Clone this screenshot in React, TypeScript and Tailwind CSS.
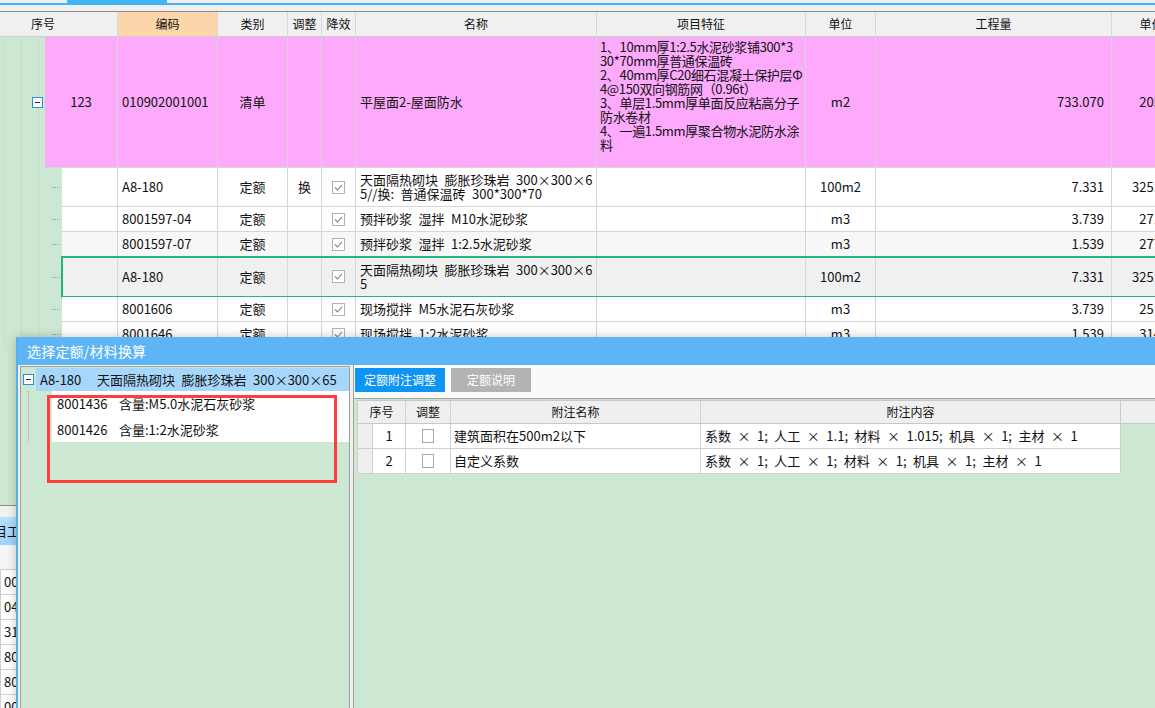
import React from "react";

const sp = (s: string) => s.replace(/ /g, "\u2002");

const T = ({ s }: { s: string }) => {
  const parts = sp(s).split("×");
  return (
    <>
      {parts.map((p, i) => (
        <React.Fragment key={i}>
          {i > 0 && <span className="inline-block w-[13px] text-center">×</span>}
          {p}
        </React.Fragment>
      ))}
    </>
  );
};

const Check = () => (
  <svg viewBox="0 0 13 13" className="w-[13px] h-[13px]">
    <rect x="0.5" y="0.5" width="12" height="12" fill="white" stroke="#b3b3b3" />
    <path d="M3 6.5 L5.5 9 L10 3.8" fill="none" stroke="#858585" strokeWidth="1.1" />
  </svg>
);

const Minus = () => (
  <div className="w-[11px] h-[11px] border border-[#2b8de0] bg-white flex items-center justify-center">
    <div className="w-[5px] h-[1px] bg-[#222]" />
  </div>
);

const cell = "shrink-0 h-full border-r border-[#d6d6d6] flex items-center overflow-hidden whitespace-pre";

type R = {
  code: string;
  type: string;
  adj?: string;
  name: string[];
  unit: string;
  qty: string;
  price: string;
  h: string;
  bg: string;
  sel?: boolean;
};

const rows: R[] = [
  { code: "A8-180", type: "定额", adj: "换", name: ["天面隔热砌块 膨胀珍珠岩 300×300×6", "5//换: 普通保温砖 300*300*70"], unit: "100m2", qty: "7.331", price: "3251.45", h: "h-[39px]", bg: "bg-white" },
  { code: "8001597-04", type: "定额", name: ["预拌砂浆 湿拌 M10水泥砂浆"], unit: "m3", qty: "3.739", price: "271.58", h: "h-[25px]", bg: "bg-white" },
  { code: "8001597-07", type: "定额", name: ["预拌砂浆 湿拌 1:2.5水泥砂浆"], unit: "m3", qty: "1.539", price: "277.12", h: "h-[25px]", bg: "bg-[#f7f7f7]" },
  { code: "A8-180", type: "定额", name: ["天面隔热砌块 膨胀珍珠岩 300×300×6", "5"], unit: "100m2", qty: "7.331", price: "3251.45", h: "h-[40px]", bg: "bg-[#f0f0f0]", sel: true },
  { code: "8001606", type: "定额", name: ["现场搅拌 M5水泥石灰砂浆"], unit: "m3", qty: "3.739", price: "251.06", h: "h-[25px]", bg: "bg-white" },
  { code: "8001646", type: "定额", name: ["现场搅拌 1:2水泥砂浆"], unit: "m3", qty: "1.539", price: "314.22", h: "h-[25px]", bg: "bg-white" },
];

const feature = [
  "1、10mm厚1:2.5水泥砂浆铺300*3",
  "30*70mm厚普通保温砖",
  "2、40mm厚C20细石混凝土保护层Φ",
  "4@150双向钢筋网（0.96t）",
  "3、单层1.5mm厚单面反应粘高分子",
  "防水卷材",
  "4、一遍1.5mm厚聚合物水泥防水涂",
  "料",
];

const TreeLines = ({ tick }: { tick?: boolean }) => (
  <div className="flex h-full items-center">
    <div className="w-[5px] h-full border-r border-[#c3ddc8]" />
    <div className="w-[17px] h-full border-r border-[#c3ddc8]" />
    <div className="w-[17px] h-full border-r border-[#c3ddc8]" />
    {tick && <div className="ml-[13px] w-[8px] border-t border-dotted border-[#9aa89e]" />}
  </div>
);

const Header = () => {
  const h = "shrink-0 h-full border-r border-[#d8d8d8] flex items-center justify-center";
  return (
    <div className="flex h-[25px] border-b border-[#d0d0d0] bg-[#f0f0f0] text-[12px] text-[#111]">
      <div className="shrink-0 h-full border-r border-[#d8d8d8] flex items-center w-[118px] pl-[31px]">序号</div>
      <div className={`${h} w-[100px] bg-[#fcd5ab]`}>编码</div>
      <div className={`${h} w-[70px]`}>类别</div>
      <div className={`${h} w-[34px]`}>调整</div>
      <div className={`${h} w-[34px]`}>降效</div>
      <div className={`${h} w-[241px]`}>名称</div>
      <div className={`${h} w-[209px]`}>项目特征</div>
      <div className={`${h} w-[70px]`}>单位</div>
      <div className={`${h} w-[236px]`}>工程量</div>
      <div className={`${h} w-[80px]`}>单价</div>
    </div>
  );
};

const MainRow = ({ r }: { r: R }) => (
  <div className={`flex ${r.h}`}>
    <div className="w-[62px] shrink-0 h-full">
      <TreeLines tick />
    </div>
    <div
      className={`flex h-full border-b border-[#d6d6d6] ${r.bg} ${
        r.sel ? "outline-2 outline-[#25b47a] -outline-offset-1" : ""
      }`}
    >
      <div className={`${cell} w-[56px]`} />
      <div className={`${cell} w-[100px] pl-[4px]`}>{r.code}</div>
      <div className={`${cell} w-[70px] justify-center`}>{r.type}</div>
      <div className={`${cell} w-[34px] justify-center`}>{r.adj ?? ""}</div>
      <div className={`${cell} w-[34px] justify-center`}>
        <Check />
      </div>
      <div className={`${cell} w-[241px] pl-[4px]`}>
        <div className="flex flex-col leading-[14px]">
          {r.name.map((n, i) => (
            <div key={i}>
              <T s={n} />
            </div>
          ))}
        </div>
      </div>
      <div className={`${cell} w-[209px]`} />
      <div className={`${cell} w-[70px] justify-center`}>{r.unit}</div>
      <div className={`${cell} w-[236px] justify-end pr-[7px]`}>{r.qty}</div>
      <div className={`${cell} w-[80px] justify-end pr-[12px]`}>{r.price}</div>
    </div>
  </div>
);

export default function App() {
  return (
    <div className="relative w-[1155px] h-[708px] overflow-hidden bg-[#cde8d2] font-[family-name:'Noto_Sans_CJK_SC','Noto_Sans',sans-serif] text-[13px] text-[#111]">
      {/* top tab strip */}
      <div className="h-[3px] bg-[#f0f0f0] flex">
        <div className="ml-[67px] w-[100px] h-full bg-[#3fb5f5]" />
      </div>
      <div className="h-[2px] bg-[#3fb5f5]" />
      <div className="h-[6px] bg-[#f0f0f0] border-b border-[#8a8a96] box-content" />

      {/* main table */}
      <Header />
      <div className="flex h-[131px]">
        <div className="w-[45px] shrink-0 h-full relative flex items-center">
          <div className="absolute inset-0">
            <TreeLines />
          </div>
          <div className="relative ml-[32px]">
            <Minus />
          </div>
        </div>
        <div className="flex h-full border-b border-[#d6d6d6] bg-[#fdaafd]">
          <div className={`${cell} w-[73px] justify-center`}>123</div>
          <div className={`${cell} w-[100px] pl-[4px]`}>010902001001</div>
          <div className={`${cell} w-[70px] justify-center`}>清单</div>
          <div className={`${cell} w-[34px]`} />
          <div className={`${cell} w-[34px]`} />
          <div className={`${cell} w-[241px] pl-[4px]`}>平屋面2-屋面防水</div>
          <div className={`${cell} w-[209px] items-start pl-[3px] pt-[3px]`}>
            <div className="flex flex-col leading-[14px] tracking-[-0.35px]">
              {feature.map((f, i) => (
                <div key={i}>{sp(f)}</div>
              ))}
            </div>
          </div>
          <div className={`${cell} w-[70px] justify-center`}>m2</div>
          <div className={`${cell} w-[236px] justify-end pr-[7px]`}>733.070</div>
          <div className={`${cell} w-[80px] justify-end pr-[12px]`}>205.62</div>
        </div>
      </div>
      {rows.map((r, i) => (
        <MainRow key={i} r={r} />
      ))}

      {/* lower background panel (mostly hidden behind dialog) */}
      <div className="h-[158px]" />
      <div className="h-[12px] border-t border-[#8c8c8c] bg-[#f2f2f2]" />
      <div className="h-[28px] bg-gradient-to-b from-[#b7e0fc] to-[#9dd2f9] flex items-center text-[13px]">
        <span className="-ml-[6px] whitespace-pre">目工程量</span>
      </div>
      <div className="h-[25px] bg-gradient-to-r from-[#f6f6f6] to-[#e6e6e6] border-b border-[#cfcfcf]" />
      {["00", "04", "31", "80", "80", "00"].map((v, i) => (
        <div key={i} className="h-[25px] bg-white border-b border-l border-[#d0d0d0] pl-[3px] flex items-center">
          {v}
        </div>
      ))}

      {/* dialog */}
      <div className="absolute left-[16px] top-[337px] w-[1150px] h-[380px] flex flex-col border-l-2 border-[#5aaef0] shadow-[0_0_10px_rgba(0,0,0,0.22)]">
        <div className="h-[28px] shrink-0 bg-[#5db5f5] pl-[9px] flex items-center text-[14px] text-white tracking-[0.2px]">
          选择定额/材料换算
        </div>
        <div className="flex-1 flex bg-[#f0f0f0] pl-[2px]">
          {/* left tree panel */}
          <div className="w-[330px] shrink-0 mt-[1px] border border-[#a0a0a0] bg-[#cde8d2] pt-[1px] flex flex-col">
            <div className="flex h-[23px] items-center">
              <div className="w-[15px] h-full flex items-center pl-[2px]">
                <Minus />
              </div>
              <div className="flex-1 h-full bg-[#a6d7fb] flex items-center pl-[4px] whitespace-pre">
                <span className="w-[57px]">A8-180</span>
                <T s="天面隔热砌块 膨胀珍珠岩 300×300×65" />
              </div>
            </div>
            <div className="flex">
              <div className="w-[31px] shrink-0 pl-[7px]">
                <div className="h-full border-l border-dotted border-[#93a99a]" />
              </div>
              <div className="flex-1 bg-white flex flex-col whitespace-pre">
                <div className="h-[26px] flex items-center pl-[5px]">
                  <span className="w-[62px]">8001436</span>
                  <span>含量:M5.0水泥石灰砂浆</span>
                </div>
                <div className="h-[25px] flex items-center pl-[5px]">
                  <span className="w-[62px]">8001426</span>
                  <span>含量:1:2水泥砂浆</span>
                </div>
              </div>
            </div>
          </div>
          <div className="w-[3px] shrink-0" />
          {/* right panel */}
          <div className="flex-1 border-l border-[#a0a0a0] bg-[#cde8d2] flex flex-col">
            <div className="h-[34px] bg-[#fafafa] border-b border-[#9d9d9d] flex items-start pt-[3px] pl-[1px] gap-[6px] text-[12px] text-white">
              <div className="w-[90px] h-[24px] bg-[#0e94f2] flex items-center justify-center">定额附注调整</div>
              <div className="w-[80px] h-[24px] bg-[#b3b3b3] flex items-center justify-center">定额说明</div>
            </div>
            <div className="pl-[3px] pt-[1px]">
              <div className="flex h-[24px] bg-[#efefef] border-y border-l border-[#c8c8c8] text-[12px]">
                <div className="w-[48px] shrink-0 border-r border-[#d2d2d2] flex items-center justify-center">序号</div>
                <div className="w-[45px] shrink-0 border-r border-[#d2d2d2] flex items-center justify-center">调整</div>
                <div className="w-[250px] shrink-0 border-r border-[#d2d2d2] flex items-center justify-center">附注名称</div>
                <div className="w-[420px] shrink-0 border-r border-[#c8c8c8] flex items-center justify-center">附注内容</div>
                <div className="flex-1" />
              </div>
              {[
                { n: "1", name: "建筑面积在500m2以下", c: "系数 × 1; 人工 × 1.1; 材料 × 1.015; 机具 × 1; 主材 × 1" },
                { n: "2", name: "自定义系数", c: "系数 × 1; 人工 × 1; 材料 × 1; 机具 × 1; 主材 × 1" },
              ].map((r) => (
                <div key={r.n} className="flex h-[25px] w-[764px] bg-white border-b border-l border-[#d0d0d0] whitespace-pre">
                  <div className="w-[15px] shrink-0 bg-[#efefef] border-r border-[#d0d0d0]" />
                  <div className="w-[33px] shrink-0 border-r border-[#d0d0d0] flex items-center justify-center">{r.n}</div>
                  <div className="w-[45px] shrink-0 border-r border-[#d0d0d0] flex items-center justify-center">
                    <div className="w-[12px] h-[14px] border border-[#a8a8a8] bg-white" />
                  </div>
                  <div className="w-[250px] shrink-0 border-r border-[#d0d0d0] flex items-center pl-[3px]">{sp(r.name)}</div>
                  <div className="w-[420px] shrink-0 border-r border-[#d0d0d0] flex items-center pl-[4px]">
                    <T s={r.c} />
                  </div>
                </div>
              ))}
            </div>
          </div>
        </div>
      </div>

      {/* red annotation box */}
      <div className="absolute left-[47px] top-[395px] w-[290px] h-[88px] border-[3px] border-[#ff3b3b]" />
    </div>
  );
}
